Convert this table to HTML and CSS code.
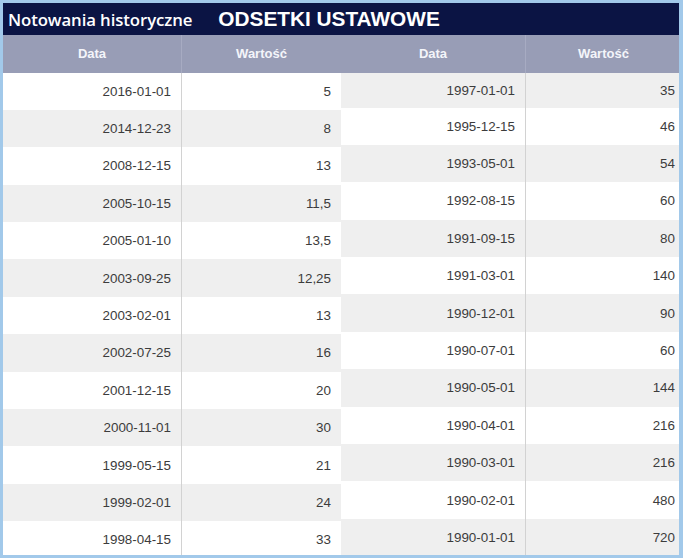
FILE: index.html
```html
<!DOCTYPE html>
<html lang="pl">
<head>
<meta charset="utf-8">
<title>Odsetki ustawowe</title>
<link rel="stylesheet" href="styles.css">
</head>
<body>
<div class="frame">
  <div class="titlebar">
    <span class="title-small">Notowania historyczne</span>
    <span class="title-big">ODSETKI USTAWOWE</span>
  </div>
  <div class="tables">
    <table class="tbl tbl-left">
      <thead>
        <tr><th class="c-date">Data</th><th class="c-val">Wartość</th></tr>
      </thead>
      <tbody>
        <tr><td class="c-date">2016-01-01</td><td class="c-val">5</td></tr>
        <tr><td class="c-date">2014-12-23</td><td class="c-val">8</td></tr>
        <tr><td class="c-date">2008-12-15</td><td class="c-val">13</td></tr>
        <tr><td class="c-date">2005-10-15</td><td class="c-val">11,5</td></tr>
        <tr><td class="c-date">2005-01-10</td><td class="c-val">13,5</td></tr>
        <tr><td class="c-date">2003-09-25</td><td class="c-val">12,25</td></tr>
        <tr><td class="c-date">2003-02-01</td><td class="c-val">13</td></tr>
        <tr><td class="c-date">2002-07-25</td><td class="c-val">16</td></tr>
        <tr><td class="c-date">2001-12-15</td><td class="c-val">20</td></tr>
        <tr><td class="c-date">2000-11-01</td><td class="c-val">30</td></tr>
        <tr><td class="c-date">1999-05-15</td><td class="c-val">21</td></tr>
        <tr><td class="c-date">1999-02-01</td><td class="c-val">24</td></tr>
        <tr><td class="c-date">1998-04-15</td><td class="c-val">33</td></tr>
      </tbody>
    </table>
    <table class="tbl tbl-right">
      <thead>
        <tr><th class="c-date">Data</th><th class="c-val">Wartość</th></tr>
      </thead>
      <tbody>
        <tr><td class="c-date">1997-01-01</td><td class="c-val">35</td></tr>
        <tr><td class="c-date">1995-12-15</td><td class="c-val">46</td></tr>
        <tr><td class="c-date">1993-05-01</td><td class="c-val">54</td></tr>
        <tr><td class="c-date">1992-08-15</td><td class="c-val">60</td></tr>
        <tr><td class="c-date">1991-09-15</td><td class="c-val">80</td></tr>
        <tr><td class="c-date">1991-03-01</td><td class="c-val">140</td></tr>
        <tr><td class="c-date">1990-12-01</td><td class="c-val">90</td></tr>
        <tr><td class="c-date">1990-07-01</td><td class="c-val">60</td></tr>
        <tr><td class="c-date">1990-05-01</td><td class="c-val">144</td></tr>
        <tr><td class="c-date">1990-04-01</td><td class="c-val">216</td></tr>
        <tr><td class="c-date">1990-03-01</td><td class="c-val">216</td></tr>
        <tr><td class="c-date">1990-02-01</td><td class="c-val">480</td></tr>
        <tr><td class="c-date">1990-01-01</td><td class="c-val">720</td></tr>
      </tbody>
    </table>
  </div>
</div>
</body>
</html>
```
FILE: styles.css
```css
html, body {
  margin: 0;
  padding: 0;
  background: #ffffff;
}

.frame {
  width: 683px;
  height: 558px;
  box-sizing: border-box;
  border: 3px solid #a2c9ea;
  border-right-width: 4px;
  overflow: hidden;
  background: #ffffff;
}

.titlebar {
  height: 32px;
  background: #0b1444;
  display: flex;
  align-items: center;
  gap: 26px;
  padding-left: 5px;
  color: #ffffff;
  white-space: nowrap;
}

.title-small {
  font-family: "Open Sans", "DejaVu Sans", sans-serif;
  font-weight: 600;
  font-size: 16.8px;
  letter-spacing: -0.1px;
}

.title-big {
  font-family: "Liberation Sans", Arial, sans-serif;
  font-weight: bold;
  font-size: 20.8px;
}

.tables {
  display: flex;
  align-items: flex-start;
}

.tbl {
  border-collapse: collapse;
  table-layout: fixed;
  font-family: "Liberation Sans", Arial, sans-serif;
}

.tbl-left {
  width: 337px;
}

.tbl-right {
  width: 339px;
}

.tbl-left .c-date { width: 178px; }
.tbl-left .c-val { width: 159px; }
.tbl-right .c-date { width: 184px; }
.tbl-right .c-val { width: 155px; }

.tbl th {
  height: 37.5px;
  padding: 0;
  background: #989db6;
  color: #f4f5fa;
  font-size: 13px;
  font-weight: bold;
  text-align: center;
  vertical-align: middle;
}

.tbl th.c-date {
  border-right: 1px solid #a7abc2;
}

.tbl td {
  height: 37.4px;
  padding: 0 10px 0 0;
  box-sizing: border-box;
  font-size: 13.4px;
  color: #3c3c3c;
  text-align: right;
  vertical-align: middle;
}

.tbl td.c-date {
  border-right: 1px solid #d2d2d2;
}

.tbl-left tbody tr:nth-child(even) td {
  background: #efefef;
}

.tbl-right tbody tr:nth-child(odd) td {
  background: #efefef;
}

.tbl-right tbody tr:first-child td {
  height: 35px;
}

.tbl-right td.c-val {
  padding-right: 6px;
}
```
